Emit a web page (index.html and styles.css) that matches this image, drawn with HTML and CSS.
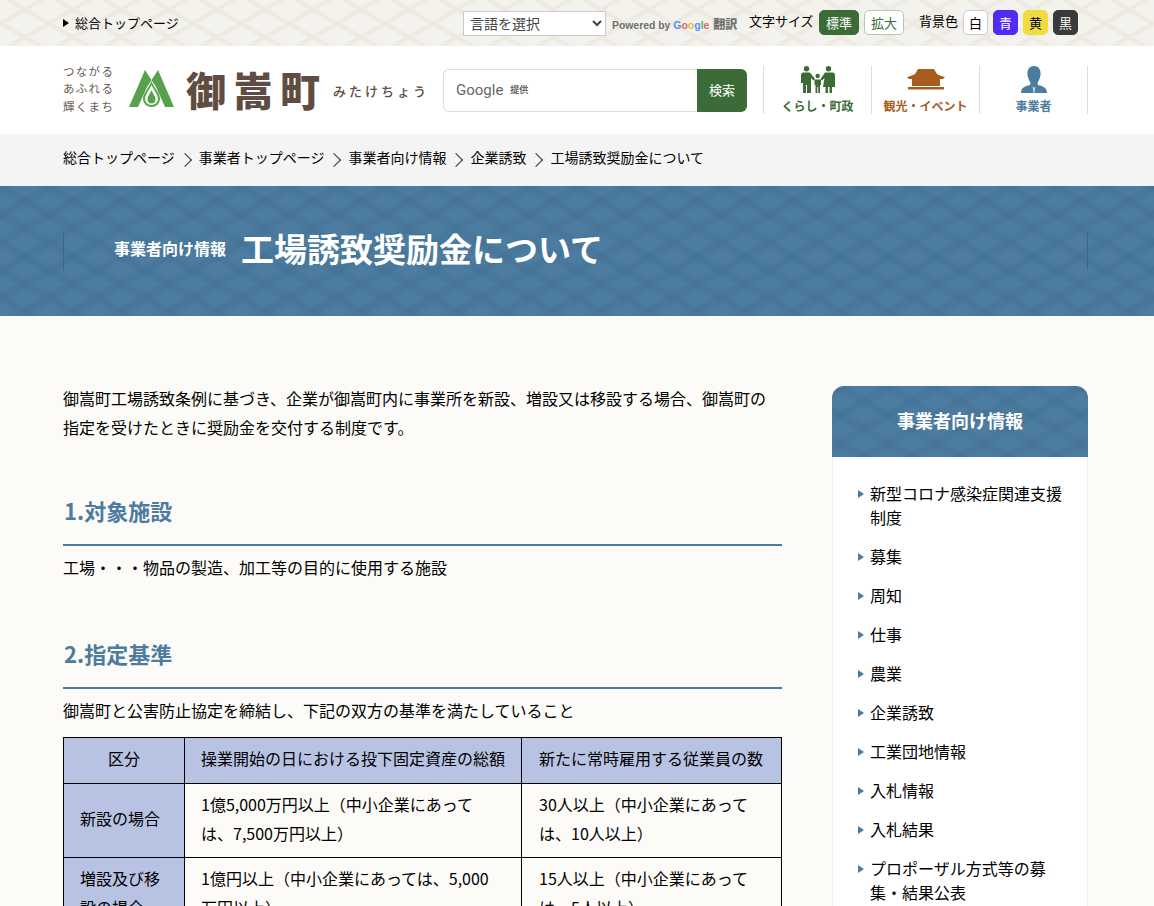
FILE: index.html
```html
<!DOCTYPE html>
<html lang="ja">
<head>
    <meta charset="UTF-8">
    <title>工場誘致奨励金について</title>
    <link rel="stylesheet" href="styles.css">
</head>
<body>
<div class="page">

<div class="topbar">
    <div class="wrap topbar-inner">
        <a class="top-link" href="#">総合トップページ</a>
        <div class="top-tools">
            <select class="lang"><option>言語を選択</option></select>
            <span class="powered">Powered by <span class="gname"><span class="g-blue">G</span><span class="g-red">o</span><span class="g-yellow">o</span><span class="g-blue">g</span><span class="g-green">l</span><span class="g-red">e</span></span> <b>翻訳</b></span>
            <span class="tool-label label-size">文字サイズ</span>
            <button class="tbtn tbtn-on">標準</button>
            <button class="tbtn tbtn-big">拡大</button>
            <span class="tool-label label-bg">背景色</span>
            <button class="cbtn c-white">白</button>
            <button class="cbtn c-blue">青</button>
            <button class="cbtn c-yellow">黄</button>
            <button class="cbtn c-black">黒</button>
        </div>
    </div>
</div>

<header class="header">
    <div class="wrap header-inner">
        <div class="logo">
            <div class="catch">つながる<br>あふれる<br>輝くまち</div>
            <svg class="mark" width="45" height="38" viewBox="0 0 45 38" fill="#56a24c">
                <path d="M16 0 L22.500 10 L29 0 L45 37 H36 L27 17 L22.500 10 L18 17 L9 37 H0 Z"/>
                <path d="M22.500 11 C25 18 31 23 31 29 A8.500 8 0 0 1 14 29 C14 23 20 18 22.500 11 Z"/>
                <path fill="#fff" d="M22.500 15 C24.500 20 29 24 29 29 A6.500 6 0 0 1 16 29 C16 24 20.500 20 22.500 15 Z"/>
                <path d="M22.500 20 C24 24 26.500 26 26.500 29.500 A4 4 0 0 1 18.500 29.500 C18.500 26 21 24 22.500 20 Z"/>
            </svg>
            <div class="town">御嵩町</div>
            <div class="town-kana">みたけちょう</div>
        </div>
        <div class="search">
            <div class="search-box"><span class="gword">Google</span><span class="gsub">提供</span></div>
            <button class="search-btn">検索</button>
        </div>
        <nav class="gnav">
            <a class="gnav-item nav-life" href="#">
                <svg width="34" height="27" viewBox="0 0 34 27" fill="#3b6c37">
                    <circle cx="5.500" cy="2.700" r="2.700"/><circle cx="27.500" cy="2.700" r="2.700"/><circle cx="16.700" cy="10" r="2.200"/>
                    <path d="M0 9 Q0 6.500 2 6.500 H9 L14 13 L12.500 14.500 L10 12 V27 H6 V19 H5 V27 H2 V17 H0 Z"/>
                    <path d="M34 9 Q34 6.500 32 6.500 H24 L19.500 13 L21 14.500 L23.500 12 L22 21 H24.500 V27 H27 V21 H28.500 V27 H31 V21 H34 Z"/>
                    <path d="M13.500 13.500 H20 V19 H19 V27 H17.200 V21 H16.300 V27 H14.500 V19 H13.500 Z"/>
                </svg>
                <span>くらし・町政</span>
            </a>
            <a class="gnav-item nav-tour" href="#">
                <svg width="38" height="21" viewBox="0 0 38 21" fill="#a85d1f">
                    <path d="M11 0 H27 L30 5 Q33 7 38 8 L36 10 H2 L0 8 Q5 7 8 5 Z"/>
                    <rect x="5" y="10" width="28" height="7"/>
                    <rect x="1" y="18" width="36" height="2.500"/>
                </svg>
                <span>観光・イベント</span>
            </a>
            <a class="gnav-item nav-biz" href="#">
                <svg width="26" height="27" viewBox="0 0 26 27" fill="#4c7c9f">
                    <path d="M13 0 C18 0 20 4 19.500 9 C19 13 17 15.500 16.500 17 L17 19 C21 20 26 21 26 27 H0 C0 21 5 20 9 19 L9.500 17 C9 15.500 7 13 6.500 9 C6 4 8 0 13 0 Z"/>
                    <path fill="#fff" d="M11.500 20 L13 22 L14.500 20 L13.500 27 H12.500 Z" opacity=".7"/>
                </svg>
                <span>事業者</span>
            </a>
        </nav>
    </div>
</header>

<div class="crumbs">
    <div class="wrap crumb-list">
        <a href="#">総合トップページ</a><a href="#">事業者トップページ</a><a href="#">事業者向け情報</a><a href="#">企業誘致</a><span>工場誘致奨励金について</span>
    </div>
</div>

<div class="title-band">
    <div class="wrap title-inner">
        <span class="title-cat">事業者向け情報</span>
        <h1>工場誘致奨励金について</h1>
    </div>
</div>

<div class="wrap content">
    <main class="main">
        <p class="lead">御嵩町工場誘致条例に基づき、企業が御嵩町内に事業所を新設、増設又は移設する場合、御嵩町の<br>指定を受けたときに奨励金を交付する制度です。</p>

        <h2>1.対象施設</h2>
        <p class="sect-text">工場・・・物品の製造、加工等の目的に使用する施設</p>

        <h2>2.指定基準</h2>
        <p class="sect-text">御嵩町と公害防止協定を締結し、下記の双方の基準を満たしていること</p>

        <table class="tbl">
            <tr>
                <th class="col-a center">区分</th>
                <th class="col-b">操業開始の日における投下固定資産の総額</th>
                <th class="col-c">新たに常時雇用する従業員の数</th>
            </tr>
            <tr>
                <th>新設の場合</th>
                <td>1億5,000万円以上（中小企業にあって<br>は、7,500万円以上）</td>
                <td>30人以上（中小企業にあって<br>は、10人以上）</td>
            </tr>
            <tr>
                <th>増設及び移<br>設の場合</th>
                <td>1億円以上（中小企業にあっては、5,000<br>万円以上）</td>
                <td>15人以上（中小企業にあって<br>は、5人以上）</td>
            </tr>
        </table>
    </main>

    <aside class="side">
        <div class="side-head">事業者向け情報</div>
        <ul class="side-list">
            <li><a href="#">新型コロナ感染症関連支援制度</a></li>
            <li><a href="#">募集</a></li>
            <li><a href="#">周知</a></li>
            <li><a href="#">仕事</a></li>
            <li><a href="#">農業</a></li>
            <li><a href="#">企業誘致</a></li>
            <li><a href="#">工業団地情報</a></li>
            <li><a href="#">入札情報</a></li>
            <li><a href="#">入札結果</a></li>
            <li><a href="#">プロポーザル方式等の募集・結果公表</a></li>
        </ul>
    </aside>
</div>

</div>
</body>
</html>
```

FILE: styles.css
```css
* {
    box-sizing: border-box;
}
html, body {
    margin: 0;
    padding: 0;
}
body {
    font-family: "Noto Sans CJK JP", "Noto Sans", sans-serif;
    font-size: 16px;
    color: #000;
    background-color: #fcfbf7;
}
a {
    color: inherit;
    text-decoration: none;
}
.page {
    height: 906px;
    overflow: hidden;
}
.wrap {
    width: 1025px;
    margin-left: 63px;
}

/* top bar */
.topbar {
    height: 46px;
    background-color: #f4f2ec;
    background-image:
        repeating-linear-gradient(30deg, transparent 0 17px, #edeae2 19px 21px, transparent 23px 24px),
        repeating-linear-gradient(-30deg, transparent 0 17px, #edeae2 19px 21px, transparent 23px 24px);
}
.topbar-inner {
    display: flex;
    justify-content: space-between;
    height: 46px;
}
.top-link {
    font-size: 13px;
    line-height: 46px;
    padding-left: 12px;
    position: relative;
}
.top-link::before {
    content: "";
    position: absolute;
    left: 0;
    top: 19px;
    border-left: 6px solid #000;
    border-top: 4px solid transparent;
    border-bottom: 4px solid transparent;
}
.top-tools {
    display: flex;
    align-items: center;
    padding-right: 10px;
}
.lang {
    width: 143px;
    height: 25px;
    margin-top: 0;
    font-family: inherit;
    font-size: 14px;
    color: #444;
    background-color: #fff;
    border: 1px solid #ccc;
    padding-left: 2px;
}
.powered {
    margin-left: 6px;
    font-family: "Liberation Sans", sans-serif;
    font-size: 10.400px;
    font-weight: bold;
    color: #6f6f6f;
    width: 137px;
    white-space: nowrap;
}
.gname {
    font-size: 10.500px;
}
.powered b {
    font-family: "Noto Sans CJK JP", sans-serif;
    font-size: 12px;
    margin-left: 1px;
}
.g-blue { color: #5b8def; }
.g-red { color: #e3685c; }
.g-yellow { color: #eab93c; }
.g-green { color: #5cb070; }
.tool-label {
    font-size: 13px;
    margin-top: -5px;
}
.label-size {
    width: 70px;
}
.label-bg {
    margin-left: 15px;
    width: 44px;
}
.tbtn, .cbtn {
    font-family: inherit;
    font-size: 13px;
    padding: 0;
    height: 25px;
    border-radius: 5px;
    margin-top: -1px;
    cursor: pointer;
}
.tbtn {
    width: 40px;
}
.tbtn-on {
    background-color: #3b6c37;
    border: 1px solid #3b6c37;
    color: #fff;
}
.tbtn-big {
    margin-left: 5px;
    background-color: #fff;
    border: 1px solid #b5c8b3;
    color: #3b6c37;
}
.cbtn {
    width: 25px;
    margin-right: 5px;
    border: 1px solid #ccc;
}
.cbtn:last-child {
    margin-right: 0;
}
.c-white { background-color: #fff; color: #000; }
.c-blue { background-color: #5229f5; border-color: #5229f5; color: #fff; }
.c-yellow { background-color: #f1dc3f; border-color: #f1dc3f; color: #000; }
.c-black { background-color: #3a3a3a; border-color: #3a3a3a; color: #fff; }

/* header */
.header {
    height: 88px;
    background-color: #fff;
}
.header-inner {
    display: flex;
    height: 88px;
}
.logo {
    width: 380px;
    display: flex;
    align-items: center;
    color: #5f4d42;
}
.catch {
    width: 66px;
    font-size: 11.500px;
    line-height: 17.500px;
    letter-spacing: 1.300px;
    color: #6b5c52;
    margin-top: -2px;
}
.mark {
    margin-top: -2px;
    flex: none;
}
.town {
    margin-left: 12px;
    width: 147px;
    font-size: 40px;
    line-height: 44px;
    font-weight: 900;
    letter-spacing: 7px;
    white-space: nowrap;
    margin-top: -3px;
}
.town-kana {
    font-size: 13px;
    letter-spacing: 3px;
    font-weight: 500;
    white-space: nowrap;
}
.search {
    display: flex;
    width: 304px;
    height: 43px;
    margin-top: 23px;
}
.search-box {
    flex: 1;
    display: flex;
    align-items: center;
    padding-left: 12px;
    padding-bottom: 2px;
    background-color: #fff;
    border: 1px solid #ddd;
    border-right: none;
    border-radius: 6px 0 0 6px;
}
.gword {
    font-family: "Roboto", "Liberation Sans", sans-serif;
    font-size: 15px;
    color: #666;
}
.gsub {
    margin-left: 7px;
    font-size: 9px;
    font-weight: bold;
    color: #666;
}
.search-btn {
    width: 50px;
    font-family: inherit;
    font-size: 13px;
    color: #fff;
    background-color: #3b6c37;
    border: none;
    border-radius: 0 6px 6px 0;
    padding: 0 0 3px;
}
.gnav {
    display: flex;
    margin-left: 16px;
    margin-top: 20px;
    height: 48px;
    border-left: 1px solid #ddd;
}
.gnav-item {
    width: 108px;
    height: 48px;
    border-right: 1px solid #ddd;
    display: flex;
    flex-direction: column;
    align-items: center;
    justify-content: space-between;
    font-size: 12px;
    font-weight: 700;
    line-height: 14px;
    padding-bottom: 1px;
}
.nav-life { color: #3b6c37; }
.nav-tour { color: #a85d1f; }
.nav-biz { color: #4c7c9f; }
.nav-tour svg {
    margin-top: 3px;
}

/* breadcrumb */
.crumbs {
    height: 52px;
    background-color: #f4f4f4;
}
.crumb-list {
    display: flex;
    align-items: center;
    height: 46px;
    font-size: 14px;
}
.crumb-list a {
    display: flex;
    align-items: center;
    margin-right: 24px;
    position: relative;
}
.crumb-list a::after {
    content: "";
    position: absolute;
    right: -15px;
    top: 8px;
    width: 9px;
    height: 9px;
    border-top: 1px solid #333;
    border-right: 1px solid #333;
    transform: rotate(45deg);
}

/* title band */
.title-band {
    height: 130px;
    background-color: #4c7c9f;
    background-image:
        repeating-linear-gradient(30deg, transparent 0 10px, rgba(64, 110, 146, .35) 14px 18px, transparent 22px 24px),
        repeating-linear-gradient(-30deg, transparent 0 10px, rgba(64, 110, 146, .35) 14px 18px, transparent 22px 24px);
}
.title-inner {
    display: flex;
    align-items: center;
    height: 38px;
    position: relative;
    top: 46px;
    padding-left: 50px;
    padding-bottom: 7px;
    border-left: 1px solid #3d6685;
    border-right: 1px solid #3d6685;
    color: #fff;
}
.title-cat {
    font-size: 16px;
    font-weight: 700;
    padding-top: 1px;
}
h1 {
    margin: 0 0 0 15px;
    font-size: 33px;
    font-weight: 700;
    line-height: 38px;
}

/* content */
.content {
    display: flex;
    justify-content: space-between;
    padding-top: 70px;
}
.main {
    width: 719px;
    margin-top: -2px;
}
.lead {
    margin: 0;
    line-height: 29px;
}
h2 {
    margin: 44px 0 0;
    height: 60px;
    font-size: 22px;
    line-height: 48px;
    font-weight: 700;
    color: #4c7c9f;
    border-bottom: 2px solid #4c7c9f;
    padding-left: 1px;
}
.sect-text {
    margin: 7px 0 0;
    line-height: 29px;
}
.sect-text + h2 {
    margin-top: 47px;
}
.tbl {
    margin-top: 12px;
    width: 718px;
    border-collapse: collapse;
    table-layout: fixed;
}
.tbl th, .tbl td {
    border: 1px solid #000;
    padding: 6px 16px 10px;
    line-height: 28.800px;
    font-weight: 400;
    text-align: left;
}
.tbl th {
    background-color: #b8c3e4;
}
.tbl th.center {
    text-align: center;
}
.tbl tr > :last-child {
    padding-left: 17px;
}
.col-a { width: 121px; }
.col-b { width: 337px; }
.col-c { width: 260px; }

/* side menu */
.side {
    width: 256px;
}
.side-head {
    height: 71px;
    line-height: 68px;
    text-align: center;
    font-size: 18px;
    font-weight: 700;
    color: #fff;
    border-radius: 12px 12px 0 0;
    background-color: #4c7c9f;
    background-image:
        repeating-linear-gradient(30deg, transparent 0 10px, rgba(64, 110, 146, .35) 14px 18px, transparent 22px 24px),
        repeating-linear-gradient(-30deg, transparent 0 10px, rgba(64, 110, 146, .35) 14px 18px, transparent 22px 24px);
}
.side-list {
    list-style: none;
    margin: 0;
    padding: 24px 24px 30px 25px;
    background-color: #fff;
    border-left: 1px solid #eeeeee;
    border-right: 1px solid #eeeeee;
}
.side-list li {
    position: relative;
    padding-left: 12px;
    line-height: 24px;
    margin-bottom: 15px;
}
.side-list li::before {
    content: "";
    position: absolute;
    left: 0;
    top: 9px;
    border-left: 6px solid #4c7c9f;
    border-top: 4px solid transparent;
    border-bottom: 4px solid transparent;
}
```
